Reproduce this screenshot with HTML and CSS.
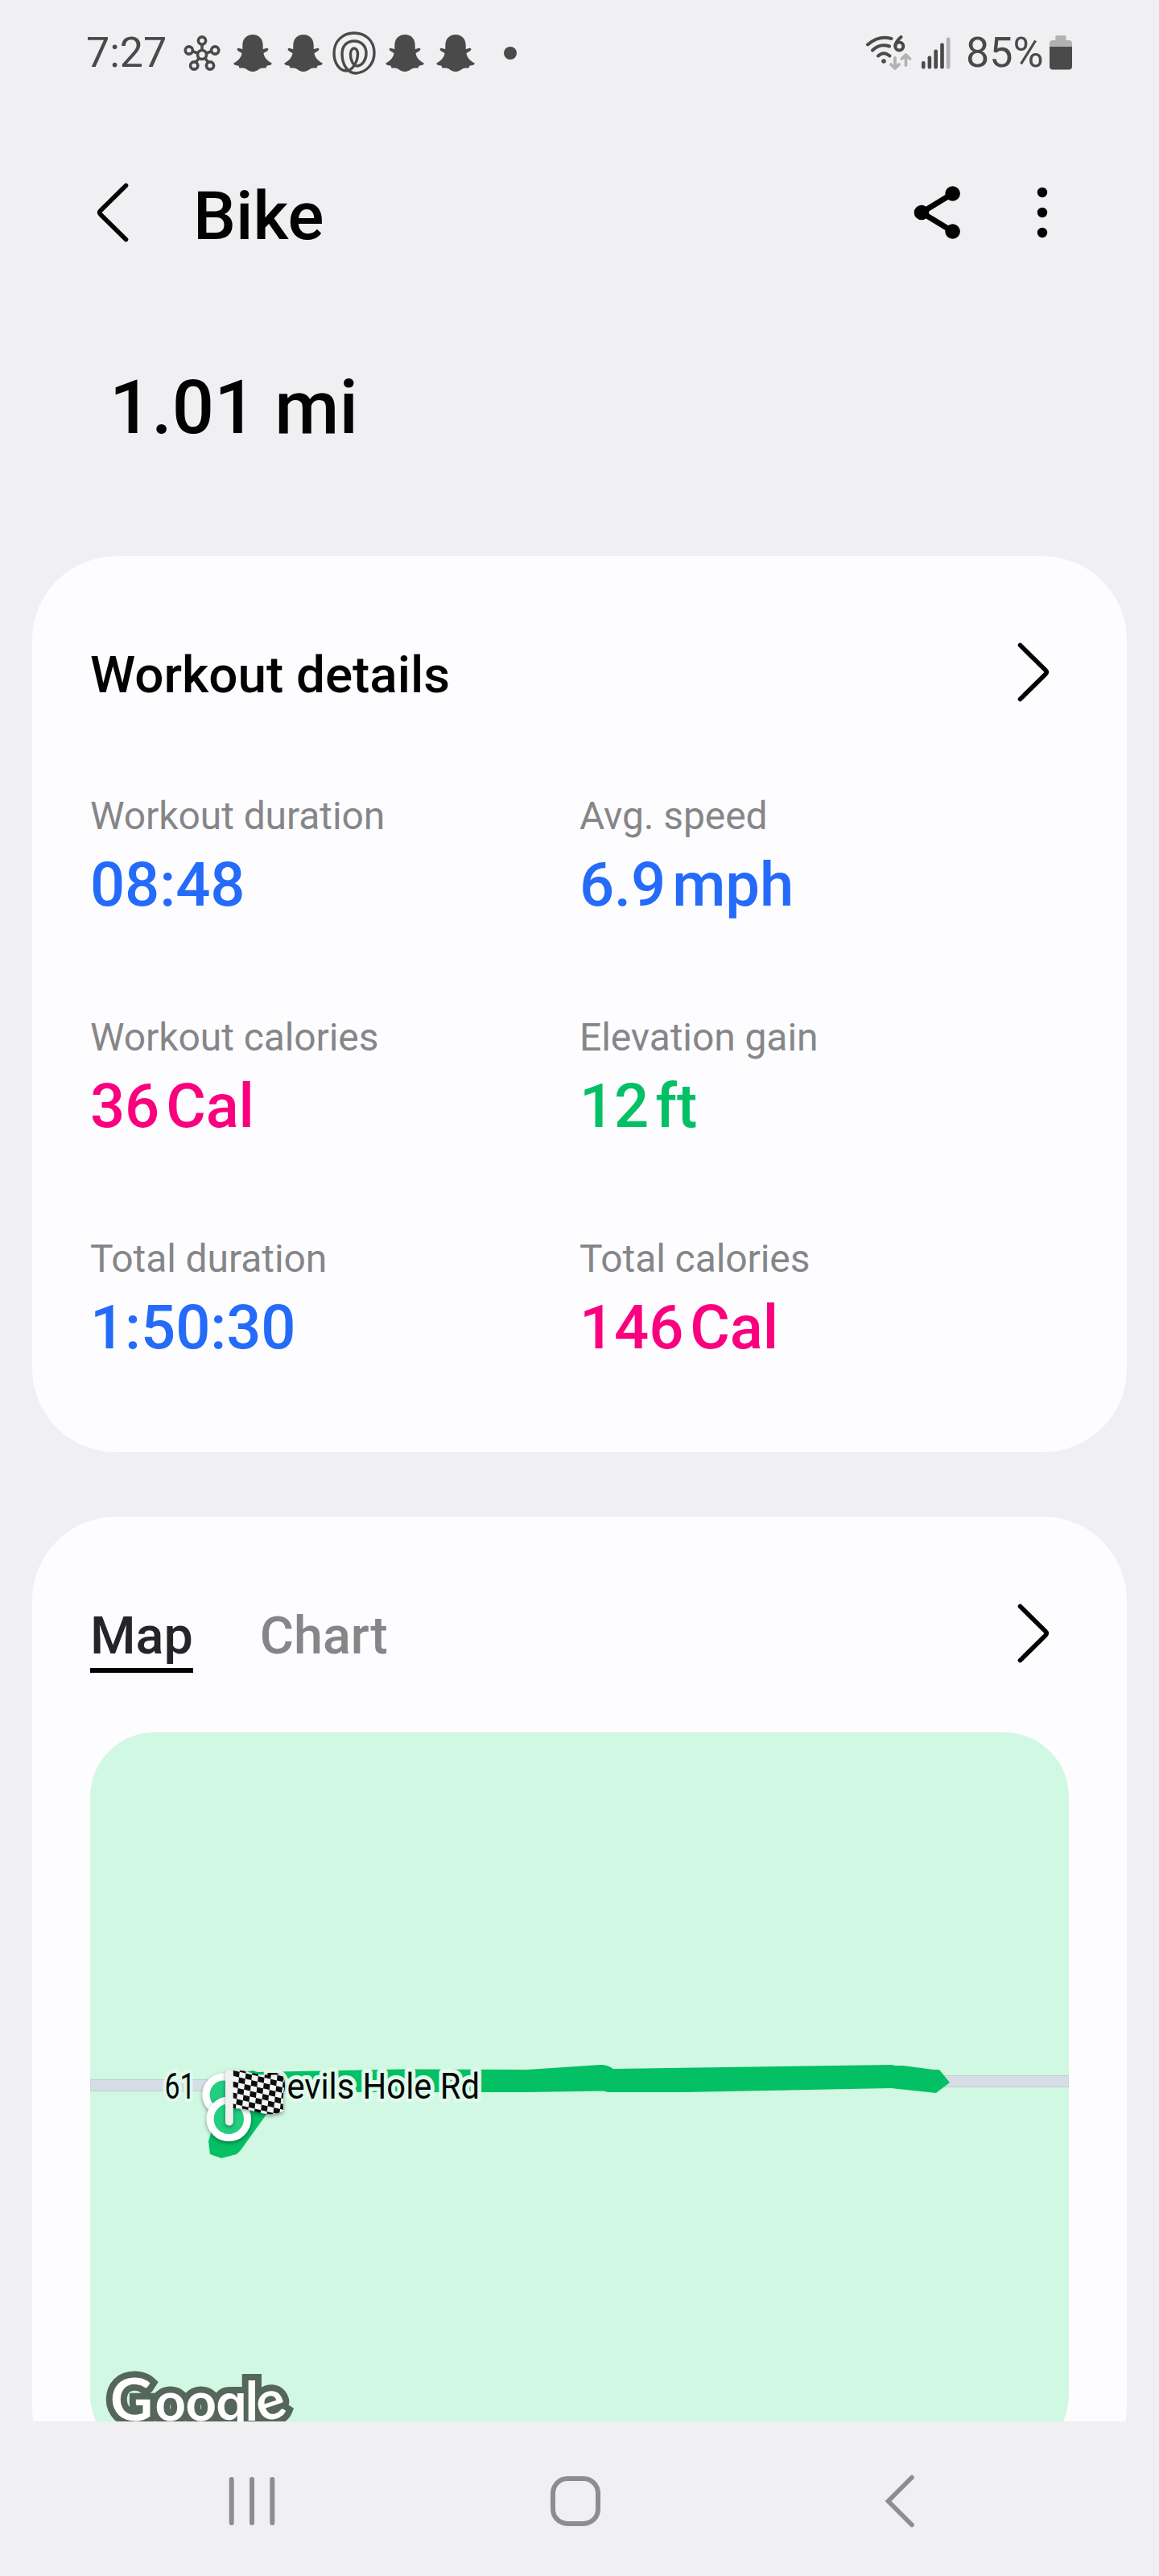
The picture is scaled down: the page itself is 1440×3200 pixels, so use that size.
FILE: index.html
```html
<!DOCTYPE html>
<html lang="en">
<head>
<meta charset="utf-8">
<title>Bike</title>
<link rel="stylesheet" href="styles.css">
</head>
<body>
<svg class="defs" width="0" height="0" aria-hidden="true">
  <symbol id="ghost" viewBox="0 0 48 46">
    <path d="M24 0C16 0 11.5 5.500 11.300 13V18C8.500 18 6 15.800 4.800 17.500C3.700 19.500 7 21 10.500 23C10 28.500 5 33 .300 35.500C0 37.500 3 38.200 6.500 38.700L7.500 41.500C10 41.800 12.500 41 15.500 42.500C18.500 44.500 20.500 46 24 46S29.500 44.500 32.500 42.500C35.500 41 38 41.800 40.500 41.500L41.500 38.700C45 38.200 48 37.500 47.700 35.500C43 33 38 28.500 37.500 23C41 21 44.300 19.500 43.200 17.500C42 15.800 39.500 18 36.700 18V13C36.500 5.500 32 0 24 0Z" fill="#4a4a4b"/>
  </symbol>
  <symbol id="chevron" viewBox="0 0 44 78">
    <path d="M5.500 5.500L37 36.500Q39.500 39 37 41.500L5.500 72.500" fill="none" stroke="#020203" stroke-width="5.600" stroke-linecap="round" stroke-linejoin="round"/>
  </symbol>
</svg>

<header class="status">
  <span class="clock">7:27</span>
  <div class="notices">
    <svg class="hub" viewBox="0 0 46 46" width="46" height="46">
      <g fill="none" stroke="#4a4a4b" stroke-width="3.600">
        <path d="M23 11.500V19M12 21L17.500 23M34 21L28.500 23M15.500 34L19 29.500M30.500 34L27 29.500"/>
        <circle cx="23" cy="25" r="5.500"/><circle cx="23" cy="7.500" r="4.600"/>
        <circle cx="6.800" cy="19.500" r="4.600"/><circle cx="39.200" cy="19.500" r="4.600"/>
        <circle cx="13.200" cy="38.500" r="4.600"/><circle cx="33" cy="38.500" r="4.600"/>
      </g>
    </svg>
    <svg width="48" height="46"><use href="#ghost"/></svg>
    <svg width="48" height="46"><use href="#ghost"/></svg>
    <svg class="rings" viewBox="0 0 54 54" width="54" height="54">
      <path d="M29.500 52C43 50.500 52 40 52 26.500C52 11.500 41 2 27 2S2 12 2 27C2 39.500 9 49 17.500 49C25 49 31.500 37 31.500 28C31.500 24 29.500 21 27 21S22.500 24 22.500 29S25 43 31 43C37.500 42 42 35 42 27.500C42 18 36 12 27 12S12 18 12 28C12 40 18 52 29.500 52Z" fill="none" stroke="#4a4a4b" stroke-width="3.400"/>
    </svg>
    <svg width="48" height="46"><use href="#ghost"/></svg>
    <svg width="48" height="46"><use href="#ghost"/></svg>
    <i class="more-notices"></i>
  </div>
  <div class="system">
    <svg viewBox="0 0 58 44" width="58" height="44">
      <g fill="none" stroke="#4a4a4b" stroke-width="4" stroke-linecap="round">
        <path d="M3 11.500Q17 -.5 32.500 4"/><path d="M9 18.500Q18 9.500 30 13.500"/><path d="M16 25.500Q23 19 30.500 25.500"/>
        <path d="M44.500 2Q37.500 8 37.500 13"/><circle cx="42.300" cy="13.500" r="5"/>
      </g>
      <circle cx="23" cy="32" r="2.800" fill="#4a4a4b"/>
      <path d="M37 28V40M32 36L37 41L42 36M50.500 37V25M45.500 29L50.500 24L55.500 29" fill="none" stroke="#b2b2b3" stroke-width="3.800" stroke-linecap="round" stroke-linejoin="round"/>
    </svg>
    <svg class="signal" viewBox="0 0 36 40" width="36" height="40">
      <g fill="#4a4a4b"><rect x="0" y="30" width="4.600" height="9.500" rx="2"/><rect x="7.600" y="23.500" width="4.600" height="16" rx="2"/><rect x="15.400" y="15.500" width="4.600" height="24" rx="2"/><rect x="23.200" y="7.500" width="4.600" height="32" rx="2"/></g>
      <rect x="30.900" y=".5" width="4.600" height="39" rx="2" fill="#b2b2b3"/>
    </svg>
    <span class="percent">85%</span>
    <svg viewBox="0 0 28 43" width="28" height="43">
      <path d="M7.300 6V2Q7.300 0 9.300 0H18.700Q20.700 0 20.700 2V6H24Q28 6 28 10V14H0V10Q0 6 4 6Z" fill="#b2b2b3"/>
      <path d="M0 14H28V38.500Q28 42.500 24 42.500H4Q0 42.500 0 38.500Z" fill="#4a4a4b"/>
    </svg>
  </div>
</header>

<div class="appbar">
  <svg class="back" width="44" height="78"><use href="#chevron"/></svg>
  <h1>Bike</h1>
  <svg class="share" viewBox="0 0 60 68" width="60" height="68">
    <path d="M48.600 10.500L10 34L48.600 57.500" fill="none" stroke="#020203" stroke-width="7"/>
    <g fill="#020203"><circle cx="10" cy="34" r="9.300"/><circle cx="48.600" cy="10.500" r="9.300"/><circle cx="48.600" cy="57.500" r="9.300"/></g>
  </svg>
  <svg viewBox="0 0 14 64" width="14" height="64" fill="#020203"><circle cx="7" cy="7" r="6.200"/><circle cx="7" cy="32" r="6.200"/><circle cx="7" cy="57" r="6.200"/></svg>
</div>

<main class="content">
  <p class="distance">1.01 mi</p>

  <section class="card details">
    <div class="card-head">
      <h2>Workout details</h2>
      <svg width="44" height="78"><use href="#chevron"/></svg>
    </div>
    <dl class="stats">
      <div><dt>Workout duration</dt><dd class="time">08:48</dd></div>
      <div><dt>Avg. speed</dt><dd class="time">6.9<span>mph</span></dd></div>
      <div><dt>Workout calories</dt><dd class="energy">36<span>Cal</span></dd></div>
      <div><dt>Elevation gain</dt><dd class="climb">12<span>ft</span></dd></div>
      <div><dt>Total duration</dt><dd class="time">1:50:30</dd></div>
      <div><dt>Total calories</dt><dd class="energy">146<span>Cal</span></dd></div>
    </dl>
  </section>

  <section class="card route">
    <div class="card-head route-head">
      <nav class="tabs"><a class="tab active">Map</a><a class="tab">Chart</a></nav>
      <svg width="44" height="78"><use href="#chevron"/></svg>
    </div>
    <svg class="map" viewBox="112 2152 1216 903" width="1216" height="903">
      <defs>
        <pattern id="checks" width="15.400" height="13.800" patternUnits="userSpaceOnUse" patternTransform="translate(290 2572) skewY(13) skewX(-6)">
          <rect width="15.400" height="13.800" fill="#f4f4f4"/>
          <rect width="7.700" height="6.900" fill="#090909"/><rect x="7.700" y="6.900" width="7.700" height="6.900" fill="#090909"/>
        </pattern>
        <filter id="lift" x="-30%" y="-30%" width="160%" height="170%"><feDropShadow dx="0" dy="2" stdDeviation="2.500" flood-color="#000" flood-opacity=".4"/></filter>
        <text id="attribution" class="attribution" y="3007"><tspan class="cap" x="137">G</tspan><tspan x="192.500 230.500">oo</tspan><tspan class="gee" x="268">g</tspan><tspan x="304.500">l</tspan><tspan x="325" dy="3" rotate="-18">e</tspan></text>
      </defs>
      <rect x="112" y="2152" width="1216" height="903" fill="#d1f8e2"/>
      <path d="M112 2583.500H300V2597.500H112ZM1150 2578.500H1328V2592.500H1150Z" fill="#d7dde6" stroke="#bccfcd" stroke-width="1"/>
      <path d="M282 2583L306 2574L314 2572L320 2574L500 2570.500L655 2571L746 2565Q754 2564.500 762 2570L1110 2565V2566H1122L1160 2571H1167L1180 2587L1163 2600L1107 2594L850 2599H755L750 2597.500L655 2599H352L330 2628L299 2671L294 2676L275 2681L261 2676L259 2660L262 2650L270 2610Z" fill="#03c065"/>
      <g class="road-label">
        <text x="204.500" y="2607.300" textLength="38" lengthAdjust="spacingAndGlyphs">61</text>
        <text x="329" y="2606.700" textLength="267" lengthAdjust="spacingAndGlyphs">Devils Hole Rd</text>
      </g>
      <g filter="url(#lift)">
        <circle cx="278" cy="2602" r="22" fill="#23ce80" stroke="#fff" stroke-width="9"/>
      </g>
      <g filter="url(#lift)">
        <circle cx="284.300" cy="2632.300" r="23.200" fill="#23ce80" stroke="#fff" stroke-width="9"/>
      </g>
      <g filter="url(#lift)">
        <path d="M289 2572Q300 2571 312 2575Q332 2580 350 2576Q354 2584 353 2594Q351 2604 352 2622Q344 2627 332 2626C317 2624 306 2618 289 2619Z" fill="url(#checks)"/>
        <rect x="280" y="2571.500" width="9.700" height="69" rx="4.800" fill="#f1f1f1"/>
      </g>
      <use href="#attribution" class="outline"/>
      <use href="#attribution" fill="#fff"/>
    </svg>
  </section>
</main>

<nav class="navbar">
  <svg viewBox="0 0 58 62" width="58" height="62"><path d="M3.700 4V58M29 4V58M54.300 4V58" stroke="#8d8d8f" stroke-width="6" stroke-linecap="round"/></svg>
  <svg class="home" viewBox="0 0 62 62" width="62" height="62"><rect x="3" y="3" width="56" height="56" rx="18" fill="none" stroke="#8d8d8f" stroke-width="6"/></svg>
  <svg viewBox="0 0 38 66" width="38" height="66"><path d="M34 3.500L4.500 33L34 62.500" fill="none" stroke="#8d8d8f" stroke-width="5.600" stroke-linecap="round"/></svg>
</nav>
</body>
</html>
```
FILE: styles.css
```css
* { box-sizing: border-box; margin: 0; padding: 0; }

body {
  width: 1440px;
  height: 3200px;
  display: flex;
  flex-direction: column;
  overflow: hidden;
  background: #f0f0f2;
  color: #020203;
  font-family: Roboto, "Liberation Sans", sans-serif;
}

svg { display: block; flex: none; }
.defs { display: none; }

.status {
  height: 131px;
  flex: none;
  display: flex;
  align-items: center;
  padding: 0 108px 0 107px;
  font-size: 52px;
  color: #4a4a4b;
}
.clock { width: 121px; }
.notices { display: flex; align-items: center; gap: 15px; }
.hub { margin-right: 1px; }
.rings { margin: 0 -3px; }
.more-notices { width: 16px; height: 16px; margin-left: 21px; border-radius: 50%; background: #4a4a4b; }
.system { display: flex; align-items: center; margin-left: auto; }
.signal { margin: 0 0 0 12px; }
.percent { width: 104px; margin-left: 19px; }

.appbar {
  height: 266px;
  flex: none;
  display: flex;
  align-items: center;
  padding: 0 138px 0 118px;
}
.back { transform: scaleX(-1); }
.appbar h1 { margin-left: 78px; padding-top: 9px; font-size: 84px; font-weight: 500; }
.share { margin-left: auto; margin-right: 93px; }

.content { height: 2611px; flex: none; overflow: hidden; padding: 0 40px; }
.distance {
  height: 219px;
  margin-bottom: 75px;
  padding-left: 96px;
  font-size: 92px;
  font-weight: 500;
  line-height: 219px;
}

.card { padding: 0 72px; border-radius: 104px; background: #fdfdff; }
.details { padding-bottom: 104px; margin-bottom: 80px; }
.route { padding-bottom: 39px; }
.card-head {
  height: 288px;
  display: flex;
  align-items: center;
  justify-content: space-between;
  padding-right: 22px;
}
.card-head h2 { padding-top: 6px; font-size: 63.8px; font-weight: 500; }

.stats { display: grid; grid-template-columns: 608px 1fr; row-gap: 104px; }
.stats dt { font-size: 48px; line-height: 69px; letter-spacing: -.08px; color: #868688; }
.stats dd { font-size: 76px; font-weight: 500; line-height: 102px; letter-spacing: -.1px; }
.stats span { margin-left: 8px; }
.time { color: #246bfa; }
.energy { color: #fb007e; }
.climb { color: #03c065; }

.route-head { height: 268px; padding-top: 22px; }
.tabs { display: flex; gap: 83px; padding-top: 12px; }
.tab {
  border-bottom: 6px solid transparent;
  font-size: 64.7px;
  font-weight: 500;
  line-height: 80px;
  color: #868688;
}
.tab.active { border-color: #020203; color: #252527; }

.map { border-radius: 80px; }
.road-label {
  font-size: 43.500px;
  fill: #050505;
  stroke: #dffaeb;
  stroke-width: 10px;
  stroke-linejoin: round;
  paint-order: stroke;
}
.attribution { font: 700 67px Lato, sans-serif; }
.outline { fill: #55665a; stroke: #55665a; stroke-width: 16px; }
.cap { font-size: 73px; }
.gee { font: 600 62px Inter, sans-serif; }

.navbar {
  height: 192px;
  flex: none;
  display: flex;
  align-items: center;
  justify-content: space-between;
  padding: 6px 303px 0 284px;
}
.home { margin-right: 12px; }
```
